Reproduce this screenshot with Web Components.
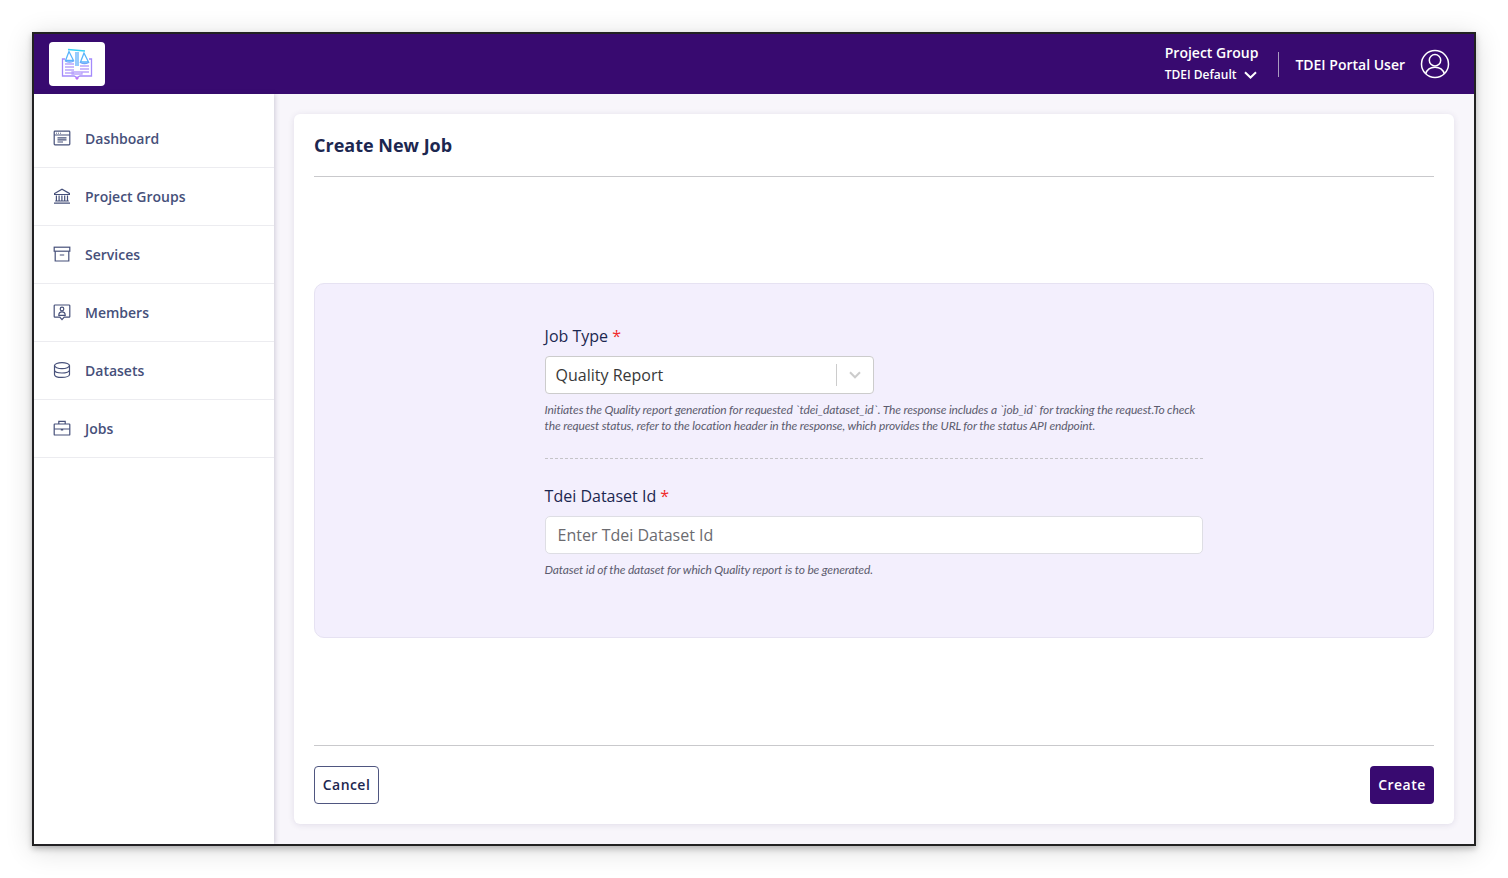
<!DOCTYPE html>
<html><head><meta charset="utf-8"><style>
html,body{margin:0;padding:0;background:#fff;height:100%;overflow:hidden}
body{padding:32px;box-sizing:border-box;font-family:"Open Sans",sans-serif;width:1508px;height:878px}
</style></head><body>
<app-window>
  <app-header slot="header"></app-header>
  <side-nav slot="side">
    <nav-item label="Dashboard" icon="dashboard"></nav-item>
    <nav-item label="Project Groups" icon="bank"></nav-item>
    <nav-item label="Services" icon="archive"></nav-item>
    <nav-item label="Members" icon="member"></nav-item>
    <nav-item label="Datasets" icon="db"></nav-item>
    <nav-item label="Jobs" icon="case"></nav-item>
  </side-nav>
  <job-card slot="main">
    <form-panel>
      <form-field label="Job Type">
        <select-box value="Quality Report"></select-box>
        <span slot="help">Initiates the Quality report generation for requested `tdei_dataset_id`. The response includes a `job_id` for tracking the request.To check the request status, refer to the location header in the response, which provides the URL for the status API endpoint.</span>
      </form-field>
      <dash-rule></dash-rule>
      <form-field label="Tdei Dataset Id">
        <text-box placeholder="Enter Tdei Dataset Id"></text-box>
        <span slot="help">Dataset id of the dataset for which Quality report is to be generated.</span>
      </form-field>
    </form-panel>
  </job-card>
</app-window>
<script>
function def(name, html){
  customElements.define(name, class extends HTMLElement{
    connectedCallback(){
      if(this.shadowRoot) return;
      const r=this.attachShadow({mode:'open'});
      r.innerHTML=typeof html==='function'?html(this):html;
    }
  });
}
const ICONS={
dashboard:`<rect x="1.2" y="2.2" width="15.6" height="13.6" rx=".8"/><path d="M1.2 6h15.6M4.500 8.800h9M4.500 10.900h9M4.500 13h5.500"/><path d="M3 4.200h.9M5 4.200h.9M7 4.200h.9" stroke-width="1"/>`,
bank:`<path d="M1.600 6.400 9 2.200l7.400 4.200v1.100H1.600z"/><path d="M3.400 8.600v5M6.100 8.600v5M8.900 8.600v5M11.700 8.600v5M14.500 8.600v5M2.200 14h13.600M1 16.200h16"/>`,
archive:`<rect x="1.200" y="2.200" width="15.600" height="4"/><path d="M2.200 6.200v9.800h13.600V6.200M6.800 10h4.400"/>`,
member:`<path d="M2 2h14a.8.8 0 0 1 .8.8v10.600a.8.8 0 0 1-.8.8h-4.800L9 16.600l-2.200-2.400H2a.8.8 0 0 1-.8-.8V2.800a.8.8 0 0 1 .8-.8z"/><circle cx="9" cy="6" r="1.800"/><path d="M5.800 12.300c0-2.200 1.400-3.400 3.200-3.400s3.200 1.200 3.200 3.400z"/>`,
db:`<ellipse cx="9" cy="4.600" rx="7.500" ry="3"/><path d="M1.500 4.600v8.800c0 1.700 3.400 3 7.500 3s7.500-1.300 7.500-3V4.600M1.500 9c0 1.700 3.400 3 7.500 3s7.500-1.300 7.500-3"/>`,
case:`<rect x="1.200" y="5" width="15.600" height="11" rx=".6"/><path d="M5.800 5V2.300h6.400V5M1.200 10h15.600M8.400 10h1.200v1H8.400z"/>`
};
def('app-window',`<style>
:host{display:block;width:1444px;height:814px;box-sizing:border-box;border:2px solid #222;box-shadow:0 3px 6px rgba(0,0,0,.22),0 4px 26px rgba(0,0,0,.14);background:#f8f6fb}
.wrap{display:flex;flex-direction:column;height:100%}
.body{display:flex;flex:1;min-height:0}
</style><div class="wrap"><slot name="header"></slot><div class="body"><slot name="side"></slot><slot name="main"></slot></div></div>`);
def('app-header',`<style>
:host{display:flex;align-items:center;height:60px;background:#380a70;color:#fff;padding:0 24px 0 15px;flex:none;box-sizing:border-box}
.logo{width:56px;height:44px;background:#fff;border-radius:4px;display:flex;align-items:center;justify-content:center}
.sp{flex:1}
.pg{display:flex;flex-direction:column;font-weight:600}
.pg b{font-weight:600;font-size:14px;line-height:20px}
.pg span{font-size:12px;line-height:20px;margin-top:2px;display:flex;align-items:center;gap:7px}
.sep{width:1px;height:25px;background:#a99bc0;margin:0 16px 0 20px}
.user{font-size:14px;font-weight:600;margin-right:15px}
</style>
<div class="logo"><svg width="32" height="32" viewBox="0 0 32 32" fill="none" stroke-width="1.300">
<path d="M7 1.500 24 3" stroke="#38d0f5"/><path d="M15 4v14M17 4v14" stroke="#5fb0fb"/><path d="M8 3.500 4.500 12.500h8zM23 5 19.500 14h8z" stroke="#58b4fb"/><path d="M4.500 12.500c0 2 8 2 8 0M19.500 14c0 2 8 2 8 0" stroke="#6ea6fb"/>
<path d="M4 11H1.500v17H13l3 1.600 3-1.600h11.500V11H28" stroke="#a48afb"/><path d="M4 16h9M4 19h9M4 22h9M4 25h9M19 18h9M19 21h9M19 24h9M11 24h10v2H11z" stroke="#b9a4fc"/><path d="M14.500 29.500 16 31l1.500-1.500" stroke="#c070fb"/></svg></div>
<div class="sp"></div>
<div class="pg"><b>Project Group</b><span>TDEI Default <svg width="13" height="8" viewBox="0 0 13 8" fill="none" stroke="#fff" stroke-width="2"><path d="M1 1.300 6.500 6.500 12 1.300"/></svg></span></div>
<div class="sep"></div>
<div class="user">TDEI Portal User</div>
<svg width="30" height="30" viewBox="0 0 30 30" fill="none" stroke="#fff" stroke-width="1.500"><circle cx="15" cy="15" r="13.500"/><circle cx="15" cy="11.300" r="5.700"/><path d="M5.600 24.800c1.400-4.400 5-6.600 9.400-6.600s8 2.200 9.400 6.600"/></svg>`);
def('side-nav',`<style>
:host{display:block;width:240px;flex:none;background:#fff;padding-top:16px;box-sizing:border-box;box-shadow:1px 0 5px rgba(40,30,70,.2);position:relative}
</style><slot></slot>`);
def('nav-item',h=>`<style>
:host{display:flex;align-items:center;height:58px;box-sizing:border-box;border-bottom:1px solid #ececf0;padding:0 0 1px 19px;gap:14px;color:#46507a;font-size:14px;font-weight:600}
svg{fill:none;stroke:#46507a;stroke-width:1.200;flex:none;display:block}
</style><svg width="18" height="18" viewBox="0 0 18 18">${ICONS[h.getAttribute('icon')]}</svg><span>${h.getAttribute('label')}</span>`);
def('job-card',`<style>
:host{display:flex;flex-direction:column;flex:1;margin:20px;background:#fff;border-radius:6px;box-shadow:0 1px 6px rgba(60,40,100,.12);padding:0 20px 20px;box-sizing:border-box;min-width:0}
h1{margin:0;font-size:18px;font-weight:700;color:#1c2750;height:62px;line-height:62px;border-bottom:1px solid #c9c9cc;flex:none}
.mid{flex:1;padding-top:106px;box-sizing:border-box}
.foot{flex:none;border-top:1px solid #c9c9cc;padding-top:20px;display:flex;justify-content:space-between}
</style><h1>Create New Job</h1><div class="mid"><slot></slot></div><div class="foot"><app-button kind="out">Cancel</app-button><app-button kind="fill">Create</app-button></div>`);
def('app-button',h=>`<style>
:host{display:inline-flex;align-items:center;justify-content:center;height:38px;padding:0 0 2px;box-sizing:border-box;border-radius:4px;font-size:14px;font-weight:600;letter-spacing:.45px;
${h.getAttribute('kind')==='fill'?'width:64px;background:#380a70;color:#fff;':'width:65px;border:1px solid #4f5680;color:#1c2750;background:#fff;'}}
</style><slot></slot>`);
def('form-panel',`<style>
:host{display:block;height:355px;box-sizing:border-box;background:#f3effd;border:1px solid #e6e2f2;border-radius:10px;padding:38px 230px 0 229.600px}
</style><slot></slot>`);
def('form-field',h=>`<style>
:host{display:block}
label{display:block;font-size:16px;line-height:28px;color:#1c2750;margin-bottom:6px}
i{font-style:normal;color:#f02b2b}
.help{font-family:Lato,sans-serif;font-style:italic;font-size:12px;line-height:16px;color:#5c5c6e;margin-top:8px;letter-spacing:-.15px}
</style><label>${h.getAttribute('label')} <i>*</i></label><slot></slot><div class="help"><slot name="help"></slot></div>`);
def('select-box',h=>`<style>
:host{display:flex;align-items:center;width:329px;height:38px;box-sizing:border-box;background:#fff;border:1px solid #ccc;border-radius:4px;font-size:16px;color:#383838;padding-left:10px}
span{flex:1}
.s{width:1px;height:22px;background:#ccc}
.c{width:36px;display:flex;justify-content:center}
</style><span>${h.getAttribute('value')}</span><div class="s"></div><div class="c"><svg width="12" height="8" viewBox="0 0 12 8" fill="none" stroke="#ccc" stroke-width="2"><path d="M1 1.300 6 6.300l5-5"/></svg></div>`);
def('text-box',h=>`<style>
:host{display:flex;align-items:center;height:38px;box-sizing:border-box;background:#fff;border:1px solid #dedee4;border-radius:5px;font-size:16px;color:#6b6b70;padding-left:12px}
</style>${h.getAttribute('placeholder')}`);
def('dash-rule',`<style>
:host{display:block;height:0;border-top:1px dashed #c4c4c8;margin:24px 0 23px}
</style>`);
</script>
</body></html>
